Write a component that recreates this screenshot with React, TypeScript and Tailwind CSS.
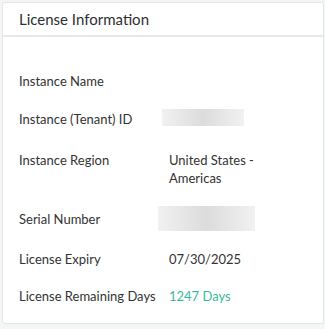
const ROWS: { label: string; value?: string; blur?: "sm" | "lg"; green?: boolean; gap: string }[] = [
  { label: "Instance Name", gap: "mt-0" },
  { label: "Instance (Tenant) ID", blur: "sm", gap: "mt-[20px]" },
  { label: "Instance Region", value: "United States - Americas", gap: "mt-[23px]" },
  { label: "Serial Number", blur: "lg", gap: "mt-[23px]" },
  { label: "License Expiry", value: "07/30/2025", gap: "mt-[22px]" },
  { label: "License Remaining Days", value: "1247 Days", green: true, gap: "mt-[19px]" },
];

// placeholders for the redacted values
function Blurred({ size }: { size: "sm" | "lg" }) {
  return size === "sm" ? (
    <div className="-mb-[1px] -ml-[7px] -mt-[1px] h-[17px] w-[82px] bg-gradient-to-r from-[#f1f1f1] via-[#dcdcdc] to-[#f1f1f1]" />
  ) : (
    <div className="-mb-[3px] -ml-[11px] -mt-[4px] h-[25px] w-[97px] bg-gradient-to-r from-[#f1f1f1] via-[#dcdcdc] to-[#f1f1f1]" />
  );
}

export default function App() {
  return (
    <div className="h-[329px] w-[325px] bg-[#f4f5f5] p-[2px] pb-[5px] font-['Lato',sans-serif] text-[#333]">
      <div className="h-full w-[322px] rounded-[3px] border border-[#e4e6e6] bg-white">
        <div className="h-[34px] border-b-2 border-[#e8e9e9] pl-4 pt-[7px] text-[15px] leading-[18px] text-[#2c2f33]">
          License Information
        </div>
        <div className="flex flex-col pl-4 pt-[35px] text-[13px] leading-[18px]">
          {ROWS.map((r) => (
            <div key={r.label} className={`flex items-start ${r.gap}`}>
              <div className="w-[150px] shrink-0">{r.label}</div>
              <div className={`w-[100px] ${r.green ? "text-[#3ab99c]" : ""}`}>
                {r.blur ? <Blurred size={r.blur} /> : r.value}
              </div>
            </div>
          ))}
        </div>
      </div>
    </div>
  );
}
